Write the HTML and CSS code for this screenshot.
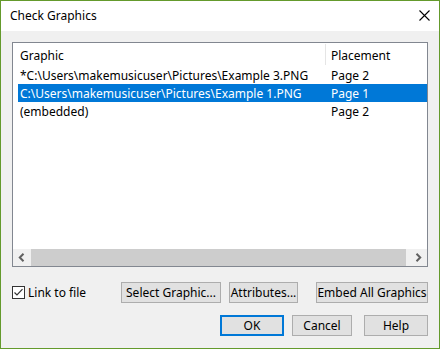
FILE: index.html
```html
<!DOCTYPE html>
<html lang="en">
<head>
    <meta charset="UTF-8">
    <title>Check Graphics</title>
    <link rel="stylesheet" href="styles.css">
</head>
<body>

    <div class="window">
        <div class="titlebar">
            <span class="title">Check Graphics</span>
            <svg class="close" width="11" height="11" viewBox="0 0 11 11">
                <path d="M0.5 0.5 L10.5 10.5 M10.5 0.5 L0.5 10.5" stroke="#000" stroke-width="1.1"/>
            </svg>
        </div>

        <div class="content">
            <div class="listbox">
                <div class="list-header">
                    <div class="col-graphic">Graphic</div>
                    <div class="col-placement">Placement</div>
                </div>
                <div class="rows">
                    <div class="row">
                        <div class="col-graphic">*C:\Users\makemusicuser\Pictures\Example 3.PNG</div>
                        <div class="col-placement">Page 2</div>
                    </div>
                    <div class="row selected">
                        <div class="col-graphic">C:\Users\makemusicuser\Pictures\Example 1.PNG</div>
                        <div class="col-placement">Page 1</div>
                    </div>
                    <div class="row">
                        <div class="col-graphic">(embedded)</div>
                        <div class="col-placement">Page 2</div>
                    </div>
                </div>
                <div class="hscroll">
                    <div class="arrow">
                        <svg width="7" height="9" viewBox="0 0 7 9"><path d="M5.5 0.8 L1.8 4.5 L5.5 8.2" fill="none" stroke="#606060" stroke-width="2"/></svg>
                    </div>
                    <div class="track"><div class="thumb"></div></div>
                    <div class="arrow">
                        <svg width="7" height="9" viewBox="0 0 7 9"><path d="M1.5 0.8 L5.2 4.5 L1.5 8.2" fill="none" stroke="#606060" stroke-width="2"/></svg>
                    </div>
                </div>
            </div>

            <div class="action-row">
                <label class="check">
                    <span class="box">
                        <svg width="11" height="11" viewBox="0 0 11 11"><path d="M1.5 5.5 L4 8 L9.5 2.2" fill="none" stroke="#333" stroke-width="1.2"/></svg>
                    </span>
                    Link to file
                </label>
                <button class="btn btn-select">Select Graphic...</button>
                <button class="btn btn-attr">Attributes...</button>
                <button class="btn btn-embed">Embed All Graphics</button>
            </div>

            <div class="dialog-row">
                <button class="btn btn-ok">OK</button>
                <button class="btn btn-cancel">Cancel</button>
                <button class="btn btn-help">Help</button>
            </div>
        </div>
    </div>

</body>
</html>
```

FILE: styles.css
```css
body {
    margin: 0;
    font-family: 'Noto Sans', 'Open Sans', sans-serif;
    font-size: 12px;
    color: #000;
}
.window {
    width: 440px;
    height: 349px;
    box-sizing: border-box;
    border: 1px solid #649a2c;
    background-color: #f0f0f0;
}
.titlebar {
    height: 30px;
    background-color: #fff;
    display: flex;
    align-items: center;
    justify-content: space-between;
    padding: 0 9px 0 9px;
}
.title {
    font-size: 12px;
    margin-top: -1px;
}
.close {
    margin-top: -1px;
}
.content {
    padding: 11px 11px 0 11px;
}
.listbox {
    width: 416px;
    height: 225px;
    box-sizing: border-box;
    border: 1px solid #828790;
    background-color: #fff;
    display: flex;
    flex-direction: column;
}
.list-header {
    height: 23px;
    display: flex;
    align-items: center;
}
.list-header .col-graphic {
    width: 312px;
    padding-left: 7px;
    padding-top: 2px;
}
.list-header .col-placement {
    border-left: 1px solid #e5e5e5;
    height: 21px;
    line-height: 23px;
    padding-left: 5px;
}
.rows {
    flex: 1;
    padding-left: 5px;
}
.row {
    height: 18px;
    display: flex;
    align-items: center;
}
.row.selected {
    background-color: #0078d7;
    color: #fff;
}
.col-graphic {
    box-sizing: border-box;
    width: 313px;
    padding-left: 2px;
    white-space: nowrap;
}
.col-placement {
    box-sizing: border-box;
    flex: 1;
}
.hscroll {
    height: 17px;
    display: flex;
    background-color: #f0f0f0;
}
.arrow {
    width: 17px;
    display: flex;
    align-items: center;
    justify-content: center;
}
.track {
    flex: 1;
    padding: 0 4px 0 1px;
}
.thumb {
    height: 100%;
    background-color: #cdcdcd;
}
.action-row {
    display: flex;
    align-items: center;
    margin-top: 15px;
    height: 21px;
}
.check {
    display: flex;
    align-items: center;
    width: 109px;
    gap: 3px;
}
.box {
    width: 11px;
    height: 11px;
    border: 1px solid #333;
    background-color: #fff;
    display: flex;
}
.btn {
    height: 21px;
    box-sizing: border-box;
    border: 1px solid #adadad;
    background-color: #e1e1e1;
    font-family: 'Noto Sans', 'Open Sans', sans-serif;
    font-size: 12px;
    color: #000;
    padding: 0;
}
.btn-select {
    width: 100px;
}
.btn-attr {
    width: 69px;
    margin-left: 8px;
}
.btn-embed {
    width: 112px;
    margin-left: 18px;
}
.dialog-row {
    display: flex;
    justify-content: flex-end;
    margin-top: 12px;
}
.btn-ok {
    width: 64px;
    border: 2px solid #0078d7;
}
.btn-cancel {
    width: 60px;
    margin-left: 8px;
}
.btn-help {
    width: 64px;
    margin-left: 12px;
}
```
